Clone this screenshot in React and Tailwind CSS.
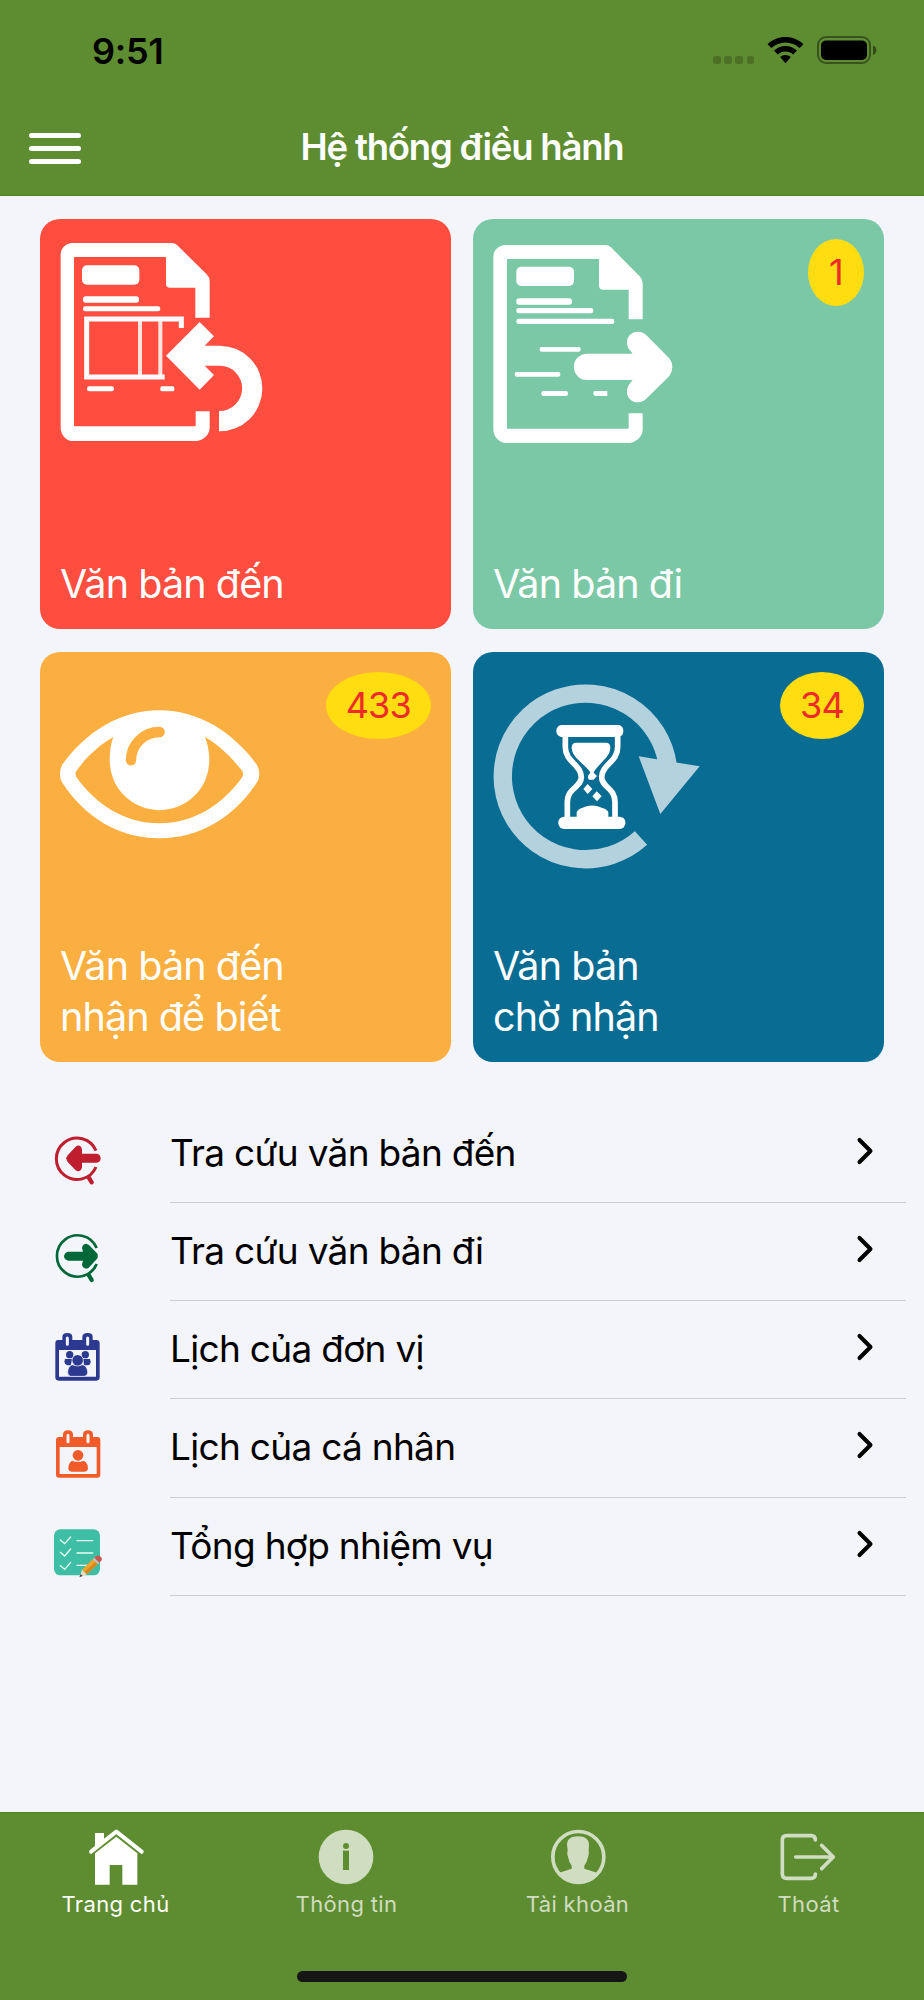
// Home screen of the document management app: header, summary cards, shortcut list and tab bar.
import { ChevronRight } from 'lucide-react';

// ── Status bar ────────────────────────────────────────
function StatusBar() {
    return (
        <div className="h-[102px] flex items-start justify-between pl-[92px] pr-[47px]">
            <span className="mt-[29px] text-[36px] leading-[44px] font-semibold tracking-[-0.2px] text-black">9:51</span>
            <div className="flex items-start gap-[13px] mt-[36px]">
                <div className="flex gap-[3.6px] mt-[20px]">
                    <span className="w-[7.5px] h-[7.5px] rounded-[2.5px] bg-black/20" />
                    <span className="w-[7.5px] h-[7.5px] rounded-[2.5px] bg-black/20" />
                    <span className="w-[7.5px] h-[7.5px] rounded-[2.5px] bg-black/20" />
                    <span className="w-[7.5px] h-[7.5px] rounded-[2.5px] bg-black/20" />
                </div>
                <svg className="w-[37px] h-[28px]" viewBox="0 0 37 28" fill="black">
                    <path d="M18.5 1C25.5 1 31.9 3.7 36.4 8.2L32.6 12.1C28.9 8.5 24 6.4 18.5 6.4S8.1 8.5 4.4 12.1L.6 8.2C5.1 3.7 11.5 1 18.5 1Z" />
                    <path d="M18.5 10C23 10 27 11.7 30 14.6L26.2 18.5C24.2 16.6 21.5 15.4 18.5 15.4S12.8 16.6 10.8 18.5L7 14.6C10 11.7 14 10 18.5 10Z" />
                    <path d="M18.5 18.9C20.6 18.9 22.4 19.7 23.8 21L18.5 27.3 13.2 21C14.6 19.7 16.4 18.9 18.5 18.9Z" />
                </svg>
                <svg className="w-[60px] h-[28px]" viewBox="0 0 60 28">
                    <rect x="1" y="1" width="52" height="26" rx="8" fill="none" stroke="black" strokeOpacity=".4" strokeWidth="2" />
                    <rect x="4" y="4.5" width="46" height="19.5" rx="5" fill="black" />
                    <path d="M56 9.5C58.2 10.4 59.4 12 59.4 14.2S58.2 18 56 18.9Z" fill="black" fillOpacity=".45" />
                </svg>
            </div>
        </div>
    );
}

// ── Card icons ────────────────────────────────────────
function IncomingIcon() {
    return (
        <svg className="w-[206px] h-[206px]" viewBox="90 86 618 618" fill="white">
            <path d="M124 98H425Q435 98 442 105L530 192Q539 201 539 213V322H496V232H420Q408 232 408 220V140H132V648H497V603H539V655C537 674 520 690 500 692H124C106 688 94 674 92 655V130C94 113 106 100 124 98Z" />
            <rect x="156" y="165" width="172" height="58" rx="15" />
            <rect x="159" y="258" width="168" height="19" rx="8" />
            <rect x="159" y="288" width="232" height="15" rx="7" />
            <path fill="none" stroke="white" strokeWidth="15" d="M454 353V326H170V500H404" />
            <path fill="none" stroke="white" strokeWidth="12" strokeOpacity=".85" d="M330 330V500M391 330V500" />
            <rect x="171" y="528" width="81" height="15" rx="7" />
            <rect x="391" y="528" width="42" height="15" rx="5" />
            <path d="M408 436 509 335 552 378 524 406H570A128 128 0 0 1 567 663V602A68 68 0 0 0 570 466H524L552 494 509 538Z" />
        </svg>
    );
}

function OutgoingIcon() {
    return (
        <svg className="w-[206px] h-[206px]" viewBox="87 86 618 618" fill="white">
            <path d="M121 104H424Q434 104 441 111L527 198Q536 207 536 218V327H494V238H418Q405 238 405 226V146H129V655H494V609H536V660C534 680 517 696 497 698H121C103 694 90 680 88 660V137C90 119 103 106 121 104Z" />
            <rect x="157" y="169" width="173" height="58" rx="15" />
            <rect x="157" y="264" width="167" height="19" rx="8" />
            <rect x="157" y="293" width="231" height="16" rx="7" />
            <rect x="157" y="325" width="294" height="16" rx="7" />
            <rect x="227" y="410" width="123" height="14" rx="6" />
            <rect x="152" y="485" width="137" height="14" rx="6" />
            <rect x="232" y="542" width="80" height="15" rx="7" />
            <path d="M395 542H430V557H395Q388 557 388 549T395 542Z" />
            <path d="M369 430H506L497 419C480 398 491 364 522 364Q537 364 549 376L617 445Q625 456 625 470T617 496L549 563Q537 576 522 576C491 576 480 542 497 520L506 509H369A39 39 0 0 1 369 430Z" />
        </svg>
    );
}

function EyeIcon() {
    return (
        <svg className="w-[206px] h-[206px]" viewBox="90 96 618 618">
            <path fill="white" fillRule="evenodd" d="M388 211C510 211 612 280 681 375Q688 387 688 402T681 427C612 532 510 595 388 595S164 532 96 427Q90 418 90 402T96 375C164 280 266 211 388 211ZM250 291C205 316 167 354 139 393Q134 402 139 411C199 495 286 550 388 550S577 495 637 411Q641 402 637 393C605 354 570 316 525 291Q538 325 538 361A149 149 0 0 1 239 361Q239 320 250 291Z" />
            <path fill="none" stroke="#FBAF41" strokeWidth="31" strokeLinecap="round" d="M303 361C303 314 340 276 389 276" />
        </svg>
    );
}

function WaitingIcon() {
    return (
        <svg className="w-[206px] h-[206px] overflow-visible" viewBox="87 96 618 618">
            <path fill="none" stroke="#B4D1DE" strokeWidth="55" d="M611 375A248.500 248.500 0 1 0 531 594" />
            <path fill="#B4D1DE" d="M524 349 707 379 589 522Z" />
            <g fill="white">
                <path d="M291 255H466Q478 260 478 273T466 291H291Q277 287 277 273T291 255Z" />
                <rect x="283" y="530" width="201" height="37" rx="17" />
                <path d="M337 308H426Q439 308 439 322C439 346 421 358 404 377Q390 392 389 398L399 408 389 419H375Q369 414 374 404L379 398Q377 392 362 378C343 359 323 346 323 322Q323 308 337 308Z" />
                <path d="M371 432 385 447 371 462 358 447ZM398 454 413 469 399 484 385 469Z" />
                <path d="M338 532V517Q342 506 356 503Q384 490 413 503Q429 506 433 517V532Z" />
            </g>
            <g fill="none" stroke="white" strokeWidth="17">
                <path d="M304 289V322C304 366 352 374 352 411C352 443 310 442 310 487V532" />
                <path d="M461 289V322C461 366 413 374 413 411C413 443 453 442 453 487V532" />
            </g>
        </svg>
    );
}

// ── List icons ────────────────────────────────────────
function SearchInIcon() {
    return (
        <svg className="w-12 h-12 overflow-visible" viewBox="72 78 144 144">
            <path fill="none" stroke="#BE1E2D" strokeWidth="9" d="M198 122A62 62 0 1 0 198 171" />
            <path fill="none" stroke="#BE1E2D" strokeWidth="13" strokeLinecap="round" d="M176 202 185 217" />
            <path fill="#BE1E2D" d="M108 145 113 136 137 110Q145 103 153 110L156 118V131H200Q212 133 212 145T200 158H156V173L152 181Q145 187 137 181L113 156Z" />
        </svg>
    );
}

function SearchOutIcon() {
    return (
        <svg className="w-12 h-12 overflow-visible" viewBox="72 373 144 144">
            <path fill="none" stroke="#006838" strokeWidth="8" d="M200 415A62 62 0 1 0 200 463" />
            <path fill="none" stroke="#006838" strokeWidth="13" strokeLinecap="round" d="M176 496 185 511" />
            <path fill="#006838" d="M115 426H159L156 415Q157 404 168 402Q177 403 182 411L203 433V445L182 468Q176 477 168 477Q157 475 156 464L159 453H115Q103 451 102 440Q103 428 115 426Z" />
        </svg>
    );
}

function UnitCalendarIcon() {
    return (
        <svg className="w-12 h-12 overflow-visible" viewBox="72 67 144 144">
            <path fill="#2B3990" fillRule="evenodd" d="M84 91H97V82Q97 70 112 70T127 82V91H157V82Q157 70 173 70T188 82V91H199Q209 91 209 101V203Q209 213 199 213H86Q76 213 76 203V101Q76 91 84 91ZM87 121V201H198V121Z" />
            <path stroke="#F4F5FA" strokeWidth="9" strokeLinecap="round" d="M112 85V104M173 85V104" />
            <g fill="#2B3990">
                <circle cx="119" cy="135" r="11" />
                <circle cx="166" cy="135" r="11" />
                <path d="M105 148H127L122 167H112Q104 165 103 156ZM180 148H158L163 167H173Q182 165 182 156Z" />
            </g>
            <path fill="#2B3990" stroke="#F4F5FA" strokeWidth="2" d="M126 165Q142 171 159 165Q173 172 173 188Q173 199 163 200H122Q113 199 113 188Q113 172 126 165Z" />
            <circle cx="143" cy="152" r="17" fill="#2B3990" stroke="#F4F5FA" strokeWidth="2" />
        </svg>
    );
}

function PersonalCalendarIcon() {
    return (
        <svg className="w-12 h-12 overflow-visible" viewBox="72 362 144 144">
            <path fill="#F15A29" fillRule="evenodd" d="M87 383H99V375Q100 363 114 363T129 375V383H159V375Q160 363 174 363T189 375V383H202Q211 383 211 392V496Q211 505 202 505H87Q78 505 78 496V392Q78 383 87 383ZM89 413V494H200V413Z" />
            <path stroke="#F4F5FA" strokeWidth="9" strokeLinecap="round" d="M114 378V397M174 378V397" />
            <circle cx="144" cy="438" r="16" fill="#F15A29" />
            <path fill="#F15A29" d="M126 454Q144 461 162 454Q175 462 174 479Q172 487 164 487H124Q116 486 115 479Q114 462 126 454Z" />
        </svg>
    );
}

function TaskIcon() {
    return (
        <svg className="w-12 h-12 overflow-visible" viewBox="72 656 144 144">
            <rect x="72" y="657" width="138" height="138" rx="19" fill="#3EBFA5" />
            <g fill="none" stroke="#EAFBF5" strokeWidth="4" strokeLinecap="round">
                <path d="M91 689 104 700 122 680M91 726 104 737 122 716M91 766 104 777 122 756" />
                <path d="M141 691H188M141 728H188M141 765H176" />
            </g>
            <path fill="#F0A52C" d="M191 744 206 759 170 792 156 778Z" />
            <path fill="#D9881F" d="M199 752 206 759 170 792 163 785Z" />
            <path fill="#E9DCC4" d="M156 778 170 792 149 801Z" />
            <path fill="#474747" d="M152 791 158 797 148 801Z" />
            <path fill="#B9C3C6" d="M188 747 195 740 210 755 203 762Z" />
            <path fill="#C4574E" d="M194 740Q204 731 212 739T211 754L208 757 193 742Z" />
        </svg>
    );
}

// ── Tab icons ─────────────────────────────────────────
function HomeIcon() {
    return (
        <svg className="w-[55px] h-[56px]" viewBox="264 87 165 168" fill="white" overflow="visible">
            <path d="M285 99H312V120L285 143Z" />
            <path fill="none" stroke="white" strokeWidth="12" strokeLinecap="round" strokeLinejoin="round" d="M273 155 349 95 425 155" />
            <path d="M349 110 412 160V254H367V195H329V254H285V160Z" />
        </svg>
    );
}

function InfoIcon() {
    return (
        <svg className="w-[55px] h-[56px]" viewBox="957 87 165 168" overflow="visible">
            <circle cx="1038" cy="171" r="82" fill="#CFDDC1" />
            <circle cx="1038" cy="138" r="9" fill="#5E8C30" />
            <path fill="#5E8C30" d="M1029 152H1047V210H1029Z" />
        </svg>
    );
}

function AccountIcon() {
    return (
        <svg className="w-[55px] h-[56px]" viewBox="264 87 165 168" fill="#CFDDC1" overflow="visible">
            <circle cx="349" cy="171" r="76.500" fill="none" stroke="#CFDDC1" strokeWidth="11" />
            <path d="M348 109C370 109 381 118 381 135L380 150Q383 163 377 174Q375 188 367 197V206L405 218C391 240 372 249 349 249S306 240 292 218L329 206V197Q321 188 319 174Q313 163 317 150L315 135C315 118 326 109 348 109Z" />
        </svg>
    );
}

function LogoutIcon() {
    return (
        <svg className="w-[55px] h-[56px]" viewBox="957 87 165 168" fill="none" stroke="#CFDDC1" strokeWidth="11" strokeLinecap="round" strokeLinejoin="round" overflow="visible">
            <path d="M1060 120Q1060 107 1047 107H974Q961 107 961 120V222Q961 235 974 235H1047Q1060 235 1060 222" />
            <path d="M1001 171H1113M1079 136 1114 171 1079 206" />
        </svg>
    );
}

const cards = [
    { lines: ['Văn bản đến'], color: 'bg-[#FF4E3F]', Icon: IncomingIcon },
    { lines: ['Văn bản đi'], color: 'bg-[#7BC8A6]', Icon: OutgoingIcon, count: 1 },
    { lines: ['Văn bản đến', 'nhận để biết'], color: 'bg-[#FBAF41]', Icon: EyeIcon, count: 433 },
    { lines: ['Văn bản', 'chờ nhận'], color: 'bg-[#086C93]', Icon: WaitingIcon, count: 34 },
];

const links = [
    { label: 'Tra cứu văn bản đến', Icon: SearchInIcon },
    { label: 'Tra cứu văn bản đi', Icon: SearchOutIcon },
    { label: 'Lịch của đơn vị', Icon: UnitCalendarIcon },
    { label: 'Lịch của cá nhân', Icon: PersonalCalendarIcon },
    { label: 'Tổng hợp nhiệm vụ', Icon: TaskIcon },
];

const tabs = [
    { label: 'Trang chủ', Icon: HomeIcon, active: true },
    { label: 'Thông tin', Icon: InfoIcon },
    { label: 'Tài khoản', Icon: AccountIcon },
    { label: 'Thoát', Icon: LogoutIcon },
];

function Card({ lines, color, Icon, count }) {
    return (
        <div className={`relative h-[410.7px] rounded-[20px] p-[20px] pb-[19px] flex flex-col justify-between text-white ${color}`}>
            <Icon />
            {count && (
                <span className="absolute top-[20px] right-[20px] min-w-[56px] h-[67px] px-[20px] rounded-[50%] bg-[#FFDD10] text-[#EE2A2A] text-center text-[36px] leading-[67px] tracking-[-0.8px]">
                    {count}
                </span>
            )}
            <div className="text-[39.5px] leading-[51px] tracking-[-0.9px] whitespace-nowrap">
                {lines.map((line) => <p key={line}>{line}</p>)}
            </div>
        </div>
    );
}

export default function App() {
    return (
        <div className="w-[924px] h-[2000px] flex flex-col overflow-hidden bg-[#F4F5FA] font-['Inter',sans-serif]">
            <header className="h-[196px] shrink-0 bg-[#5E8C30] border-b border-[#54802A]">
                <StatusBar />
                <div className="relative h-[93px] pb-[3px] flex items-center justify-center">
                    <button className="absolute left-[29px] top-[31px] flex flex-col gap-[8px]">
                        <span className="w-[52px] h-[5px] rounded-full bg-white" />
                        <span className="w-[52px] h-[5px] rounded-full bg-white" />
                        <span className="w-[52px] h-[5px] rounded-full bg-white" />
                    </button>
                    <h1 className="text-[36.5px] leading-[44px] font-semibold tracking-[-1.2px] text-white whitespace-nowrap">Hệ thống điều hành</h1>
                </div>
            </header>

            <main className="flex-1">
                {/* Summary cards */}
                <div className="grid grid-cols-2 gap-x-[22px] gap-y-[22.5px] pt-[22.5px] px-[40px]">
                    {cards.map((card, i) => <Card key={i} {...card} />)}
                </div>

                {/* Shortcuts */}
                <ul className="mt-[42.5px]">
                    {links.map(({ label, Icon }) => (
                        <li key={label} className="h-[98.2px] flex pl-[54px] pr-[18px]">
                            <div className="w-[116px] shrink-0 pt-[31px]"><Icon /></div>
                            <div className="flex-1 flex justify-between border-b border-[#CDCED3]">
                                <span className="mt-[25px] text-[37px] leading-[46px] tracking-[-0.7px] text-black whitespace-nowrap">{label}</span>
                                <ChevronRight className="w-[44px] h-[44px] mt-[24px] mr-[19px]" color="black" strokeWidth={2.2} />
                            </div>
                        </li>
                    ))}
                </ul>
            </main>

            <nav className="h-[188px] shrink-0 flex flex-col bg-[#5E8C30] border-t border-[#54802A]">
                <div className="grid grid-cols-4 pt-[16px]">
                    {tabs.map(({ label, Icon, active }) => (
                        <button key={label} className={`flex flex-col items-center ${active ? 'text-white' : 'text-[#CFDDC1]'}`}>
                            <Icon />
                            <span className="mt-[5px] text-[22px] leading-[28px] tracking-[0.35px]">{label}</span>
                        </button>
                    ))}
                </div>
                <div className="mt-auto mb-[18px] mx-auto w-[330px] h-[11px] rounded-full bg-[#161616]" />
            </nav>
        </div>
    );
}
